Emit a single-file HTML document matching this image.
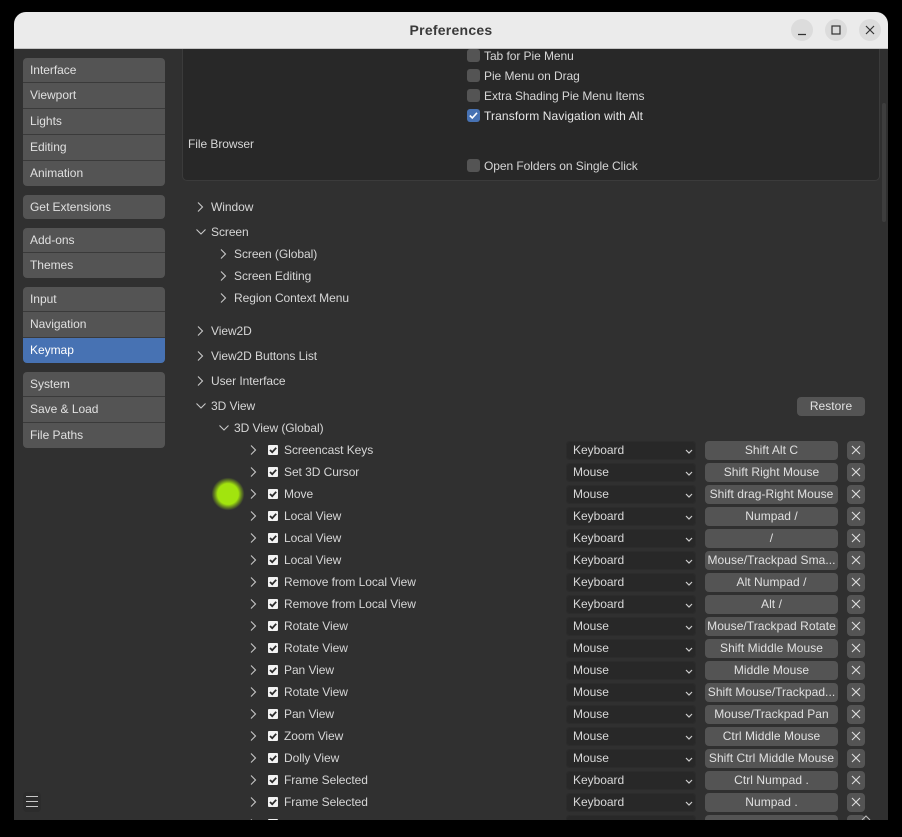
<!DOCTYPE html>
<html><head><meta charset="utf-8">
<style>
html,body{margin:0;padding:0;background:#000;width:902px;height:837px;overflow:hidden}
*{box-sizing:border-box}
#win{position:absolute;left:14px;top:12px;width:874px;height:808px;background:#303030;border-radius:12px 12px 0 0;overflow:hidden;
font-family:"Liberation Sans",sans-serif;font-size:12px;letter-spacing:-.06px;color:#d6d6d6}
#win>*{position:absolute}
#tb{left:0;top:0;width:874px;height:37px;background:#ebebeb;border-bottom:1px solid #c4c4c4;color:#3a3a3a;font-weight:bold;font-size:14px;text-align:center;line-height:36px;letter-spacing:.25px}
.wb{top:7px;width:22px;height:22px;border-radius:50%;background:#dcdcdc}
.wb svg{position:absolute;left:0;top:0}
.s{left:9px;width:142px;background:#545454;color:#e0e0e0;line-height:24px;padding-left:7px;border-bottom:1px solid #3a3a3a;height:25px;white-space:nowrap;letter-spacing:-.03px}
.f{border-radius:4px 4px 0 0}.l{border-radius:0 0 4px 4px;border-bottom:0}.o{border-radius:4px;border-bottom:0;height:24px}
.a{background:#4772b3;color:#fff}
#panel{left:168px;top:37px;width:698px;height:132px;background:#282828;border:1px solid #3b3b3b;border-top:0;border-radius:0 0 5px 5px}
.t{height:20px;line-height:20px;white-space:nowrap}
.c{left:453px;width:13px;height:13px;background:#545454;border-radius:3px}
.ch{width:12px;height:12px}
.d{left:552px;width:130px;height:19px;background:#282828;border-radius:4px;line-height:19px;padding-left:7px;color:#d8d8d8;box-shadow:inset 0 0 0 1px #2c2c2c;transform:translateY(1px);letter-spacing:-.03px}
.k{left:691px;width:133px;height:19px;background:#545454;border-radius:4px;line-height:19px;text-align:center;color:#e0e0e0;white-space:nowrap;overflow:hidden;letter-spacing:.05px;transform:translateY(1px)}
.x{left:833px;width:18px;height:19px;background:#545454;border-radius:4px;transform:translateY(1px)}
.x svg{margin-top:-1px}
.cb{left:254px;width:10px;height:10px;background:#f2f2f2;border-radius:1px}
</style></head><body>
<svg width="0" height="0" style="position:absolute"><defs>
<symbol id="r" viewBox="0 0 12 12"><path d="M4 1.500 8.500 6 4 10.500" fill="none" stroke="#c8c8c8" stroke-width="1.100"/></symbol>
<symbol id="w" viewBox="0 0 12 12"><path d="M2.500 3.500 7 8 11.500 3.500" fill="none" stroke="#c8c8c8" stroke-width="1.100"/></symbol>
<symbol id="dd" viewBox="0 0 8 6"><path d="M1 1 4 4 7 1" fill="none" stroke="#cfcfcf" stroke-width="1.200"/></symbol>
<symbol id="xx" viewBox="0 0 10 10"><path d="M1 1 9 9M9 1 1 9" fill="none" stroke="#dedede" stroke-width="1.100"/></symbol>
<symbol id="tk" viewBox="0 0 10 10"><path d="M2 5 4.200 7.200 8.200 2.800" fill="none" stroke="#2a2a2a" stroke-width="1.800"/></symbol>
</defs></svg>
<div id="win">
<div id="panel"></div>
<div id="tb">Preferences</div>
<div class="wb" style="left:777px"><svg width="22" height="22"><path d="M7 15.500H15" stroke="#333" stroke-width="1.200"/></svg></div>
<div class="wb" style="left:811px"><svg width="22" height="22"><rect x="7" y="7" width="8" height="8" fill="none" stroke="#333" stroke-width="1.200"/></svg></div>
<div class="wb" style="left:845px"><svg width="22" height="22"><path d="M7 7 15 15M15 7 7 15" stroke="#333" stroke-width="1.200"/></svg></div>

<div class="s f" style="top:46px">Interface</div>
<div class="s" style="top:71px;height:26px;line-height:25px">Viewport</div>
<div class="s" style="top:97px;height:26px;line-height:25px">Lights</div>
<div class="s" style="top:123px;height:26px;line-height:25px">Editing</div>
<div class="s l" style="top:149px">Animation</div>
<div class="s o" style="top:183px">Get Extensions</div>
<div class="s f" style="top:216px">Add-ons</div>
<div class="s l" style="top:241px">Themes</div>
<div class="s f" style="top:275px">Input</div>
<div class="s" style="top:300px;height:26px;line-height:25px">Navigation</div>
<div class="s l a" style="top:326px">Keymap</div>
<div class="s f" style="top:360px">System</div>
<div class="s" style="top:385px;height:26px;line-height:25px">Save &amp; Load</div>
<div class="s l" style="top:411px">File Paths</div>
<div style="left:9px;top:780px;width:18px;height:20px;background:#2c2c2c;border-radius:4px"><svg width="18" height="20" style="display:block"><path d="M3 4.500H15M3 9.500H15M3 14.500H15" stroke="#c8c8c8" stroke-width="1"/></svg></div>

<div class="c" style="top:37px"></div><div class="t" style="left:470px;top:34px">Tab for Pie Menu</div>
<div class="c" style="top:57px"></div><div class="t" style="left:470px;top:54px">Pie Menu on Drag</div>
<div class="c" style="top:77px"></div><div class="t" style="left:470px;top:74px">Extra Shading Pie Menu Items</div>
<div class="c" style="top:97px;background:#4772b3"><svg width="13" height="13" style="display:block"><path d="M2.800 6.500 5.300 9 10 3.800" fill="none" stroke="#fff" stroke-width="1.600"/></svg></div><div class="t" style="left:470px;top:94px;color:#e6e6e6;letter-spacing:.12px">Transform Navigation with Alt</div>
<div class="t" style="left:174px;top:122px">File Browser</div>
<div class="c" style="top:147px"></div><div class="t" style="left:470px;top:144px">Open Folders on Single Click</div>

<div style="left:868px;top:91px;width:4px;height:119px;background:#3e3e3e;border-radius:2px"></div>

<svg class="ch" style="left:180px;top:189px"><use href="#r"/></svg><div class="t" style="left:197px;top:185px">Window</div>
<svg class="ch" style="left:180px;top:214px"><use href="#w"/></svg><div class="t" style="left:197px;top:210px">Screen</div>
<svg class="ch" style="left:203px;top:236px"><use href="#r"/></svg><div class="t" style="left:220px;top:232px">Screen (Global)</div>
<svg class="ch" style="left:203px;top:258px"><use href="#r"/></svg><div class="t" style="left:220px;top:254px">Screen Editing</div>
<svg class="ch" style="left:203px;top:280px"><use href="#r"/></svg><div class="t" style="left:220px;top:276px">Region Context Menu</div>
<svg class="ch" style="left:180px;top:313px"><use href="#r"/></svg><div class="t" style="left:197px;top:309px">View2D</div>
<svg class="ch" style="left:180px;top:338px"><use href="#r"/></svg><div class="t" style="left:197px;top:334px">View2D Buttons List</div>
<svg class="ch" style="left:180px;top:363px"><use href="#r"/></svg><div class="t" style="left:197px;top:359px">User Interface</div>
<svg class="ch" style="left:180px;top:388px"><use href="#w"/></svg><div class="t" style="left:197px;top:384px">3D View</div>
<div class="k" style="left:783px;top:384px;width:68px">Restore</div>
<svg class="ch" style="left:203px;top:410px"><use href="#w"/></svg><div class="t" style="left:220px;top:406px">3D View (Global)</div>

<div style="left:193.500px;top:462px;width:40px;height:40px;border-radius:50%;background:radial-gradient(circle closest-side,#a2e40e 0,#a2e40e 52%,rgba(162,228,14,.5) 66%,rgba(162,228,14,0) 82%)"></div>

<svg class="ch" style="left:233px;top:432px"><use href="#r"/></svg><div class="cb" style="top:433px"><svg width="10" height="10" style="display:block"><use href="#tk"/></svg></div><div class="t" style="left:270px;top:428px">Screencast Keys</div><div class="d" style="top:428px">Keyboard<svg width="8" height="6" style="position:absolute;left:119px;top:8px"><use href="#dd"/></svg></div><div class="k" style="top:428px">Shift Alt C</div><div class="x" style="top:428px"><svg width="18" height="20" style="display:block"><use href="#xx" x="4" y="5" width="10" height="10"/></svg></div>
<svg class="ch" style="left:233px;top:454px"><use href="#r"/></svg><div class="cb" style="top:455px"><svg width="10" height="10" style="display:block"><use href="#tk"/></svg></div><div class="t" style="left:270px;top:450px">Set 3D Cursor</div><div class="d" style="top:450px">Mouse<svg width="8" height="6" style="position:absolute;left:119px;top:8px"><use href="#dd"/></svg></div><div class="k" style="top:450px">Shift Right Mouse</div><div class="x" style="top:450px"><svg width="18" height="20" style="display:block"><use href="#xx" x="4" y="5" width="10" height="10"/></svg></div>
<svg class="ch" style="left:233px;top:476px"><use href="#r"/></svg><div class="cb" style="top:477px"><svg width="10" height="10" style="display:block"><use href="#tk"/></svg></div><div class="t" style="left:270px;top:472px">Move</div><div class="d" style="top:472px">Mouse<svg width="8" height="6" style="position:absolute;left:119px;top:8px"><use href="#dd"/></svg></div><div class="k" style="top:472px">Shift drag-Right Mouse</div><div class="x" style="top:472px"><svg width="18" height="20" style="display:block"><use href="#xx" x="4" y="5" width="10" height="10"/></svg></div>
<svg class="ch" style="left:233px;top:498px"><use href="#r"/></svg><div class="cb" style="top:499px"><svg width="10" height="10" style="display:block"><use href="#tk"/></svg></div><div class="t" style="left:270px;top:494px">Local View</div><div class="d" style="top:494px">Keyboard<svg width="8" height="6" style="position:absolute;left:119px;top:8px"><use href="#dd"/></svg></div><div class="k" style="top:494px">Numpad /</div><div class="x" style="top:494px"><svg width="18" height="20" style="display:block"><use href="#xx" x="4" y="5" width="10" height="10"/></svg></div>
<svg class="ch" style="left:233px;top:520px"><use href="#r"/></svg><div class="cb" style="top:521px"><svg width="10" height="10" style="display:block"><use href="#tk"/></svg></div><div class="t" style="left:270px;top:516px">Local View</div><div class="d" style="top:516px">Keyboard<svg width="8" height="6" style="position:absolute;left:119px;top:8px"><use href="#dd"/></svg></div><div class="k" style="top:516px">/</div><div class="x" style="top:516px"><svg width="18" height="20" style="display:block"><use href="#xx" x="4" y="5" width="10" height="10"/></svg></div>
<svg class="ch" style="left:233px;top:542px"><use href="#r"/></svg><div class="cb" style="top:543px"><svg width="10" height="10" style="display:block"><use href="#tk"/></svg></div><div class="t" style="left:270px;top:538px">Local View</div><div class="d" style="top:538px">Keyboard<svg width="8" height="6" style="position:absolute;left:119px;top:8px"><use href="#dd"/></svg></div><div class="k" style="top:538px">Mouse/Trackpad Sma...</div><div class="x" style="top:538px"><svg width="18" height="20" style="display:block"><use href="#xx" x="4" y="5" width="10" height="10"/></svg></div>
<svg class="ch" style="left:233px;top:564px"><use href="#r"/></svg><div class="cb" style="top:565px"><svg width="10" height="10" style="display:block"><use href="#tk"/></svg></div><div class="t" style="left:270px;top:560px">Remove from Local View</div><div class="d" style="top:560px">Keyboard<svg width="8" height="6" style="position:absolute;left:119px;top:8px"><use href="#dd"/></svg></div><div class="k" style="top:560px">Alt Numpad /</div><div class="x" style="top:560px"><svg width="18" height="20" style="display:block"><use href="#xx" x="4" y="5" width="10" height="10"/></svg></div>
<svg class="ch" style="left:233px;top:586px"><use href="#r"/></svg><div class="cb" style="top:587px"><svg width="10" height="10" style="display:block"><use href="#tk"/></svg></div><div class="t" style="left:270px;top:582px">Remove from Local View</div><div class="d" style="top:582px">Keyboard<svg width="8" height="6" style="position:absolute;left:119px;top:8px"><use href="#dd"/></svg></div><div class="k" style="top:582px">Alt /</div><div class="x" style="top:582px"><svg width="18" height="20" style="display:block"><use href="#xx" x="4" y="5" width="10" height="10"/></svg></div>
<svg class="ch" style="left:233px;top:608px"><use href="#r"/></svg><div class="cb" style="top:609px"><svg width="10" height="10" style="display:block"><use href="#tk"/></svg></div><div class="t" style="left:270px;top:604px">Rotate View</div><div class="d" style="top:604px">Mouse<svg width="8" height="6" style="position:absolute;left:119px;top:8px"><use href="#dd"/></svg></div><div class="k" style="top:604px">Mouse/Trackpad Rotate</div><div class="x" style="top:604px"><svg width="18" height="20" style="display:block"><use href="#xx" x="4" y="5" width="10" height="10"/></svg></div>
<svg class="ch" style="left:233px;top:630px"><use href="#r"/></svg><div class="cb" style="top:631px"><svg width="10" height="10" style="display:block"><use href="#tk"/></svg></div><div class="t" style="left:270px;top:626px">Rotate View</div><div class="d" style="top:626px">Mouse<svg width="8" height="6" style="position:absolute;left:119px;top:8px"><use href="#dd"/></svg></div><div class="k" style="top:626px">Shift Middle Mouse</div><div class="x" style="top:626px"><svg width="18" height="20" style="display:block"><use href="#xx" x="4" y="5" width="10" height="10"/></svg></div>
<svg class="ch" style="left:233px;top:652px"><use href="#r"/></svg><div class="cb" style="top:653px"><svg width="10" height="10" style="display:block"><use href="#tk"/></svg></div><div class="t" style="left:270px;top:648px">Pan View</div><div class="d" style="top:648px">Mouse<svg width="8" height="6" style="position:absolute;left:119px;top:8px"><use href="#dd"/></svg></div><div class="k" style="top:648px">Middle Mouse</div><div class="x" style="top:648px"><svg width="18" height="20" style="display:block"><use href="#xx" x="4" y="5" width="10" height="10"/></svg></div>
<svg class="ch" style="left:233px;top:674px"><use href="#r"/></svg><div class="cb" style="top:675px"><svg width="10" height="10" style="display:block"><use href="#tk"/></svg></div><div class="t" style="left:270px;top:670px">Rotate View</div><div class="d" style="top:670px">Mouse<svg width="8" height="6" style="position:absolute;left:119px;top:8px"><use href="#dd"/></svg></div><div class="k" style="top:670px">Shift Mouse/Trackpad...</div><div class="x" style="top:670px"><svg width="18" height="20" style="display:block"><use href="#xx" x="4" y="5" width="10" height="10"/></svg></div>
<svg class="ch" style="left:233px;top:696px"><use href="#r"/></svg><div class="cb" style="top:697px"><svg width="10" height="10" style="display:block"><use href="#tk"/></svg></div><div class="t" style="left:270px;top:692px">Pan View</div><div class="d" style="top:692px">Mouse<svg width="8" height="6" style="position:absolute;left:119px;top:8px"><use href="#dd"/></svg></div><div class="k" style="top:692px">Mouse/Trackpad Pan</div><div class="x" style="top:692px"><svg width="18" height="20" style="display:block"><use href="#xx" x="4" y="5" width="10" height="10"/></svg></div>
<svg class="ch" style="left:233px;top:718px"><use href="#r"/></svg><div class="cb" style="top:719px"><svg width="10" height="10" style="display:block"><use href="#tk"/></svg></div><div class="t" style="left:270px;top:714px">Zoom View</div><div class="d" style="top:714px">Mouse<svg width="8" height="6" style="position:absolute;left:119px;top:8px"><use href="#dd"/></svg></div><div class="k" style="top:714px">Ctrl Middle Mouse</div><div class="x" style="top:714px"><svg width="18" height="20" style="display:block"><use href="#xx" x="4" y="5" width="10" height="10"/></svg></div>
<svg class="ch" style="left:233px;top:740px"><use href="#r"/></svg><div class="cb" style="top:741px"><svg width="10" height="10" style="display:block"><use href="#tk"/></svg></div><div class="t" style="left:270px;top:736px">Dolly View</div><div class="d" style="top:736px">Mouse<svg width="8" height="6" style="position:absolute;left:119px;top:8px"><use href="#dd"/></svg></div><div class="k" style="top:736px">Shift Ctrl Middle Mouse</div><div class="x" style="top:736px"><svg width="18" height="20" style="display:block"><use href="#xx" x="4" y="5" width="10" height="10"/></svg></div>
<svg class="ch" style="left:233px;top:762px"><use href="#r"/></svg><div class="cb" style="top:763px"><svg width="10" height="10" style="display:block"><use href="#tk"/></svg></div><div class="t" style="left:270px;top:758px">Frame Selected</div><div class="d" style="top:758px">Keyboard<svg width="8" height="6" style="position:absolute;left:119px;top:8px"><use href="#dd"/></svg></div><div class="k" style="top:758px">Ctrl Numpad .</div><div class="x" style="top:758px"><svg width="18" height="20" style="display:block"><use href="#xx" x="4" y="5" width="10" height="10"/></svg></div>
<svg class="ch" style="left:233px;top:784px"><use href="#r"/></svg><div class="cb" style="top:785px"><svg width="10" height="10" style="display:block"><use href="#tk"/></svg></div><div class="t" style="left:270px;top:780px">Frame Selected</div><div class="d" style="top:780px">Keyboard<svg width="8" height="6" style="position:absolute;left:119px;top:8px"><use href="#dd"/></svg></div><div class="k" style="top:780px">Numpad .</div><div class="x" style="top:780px"><svg width="18" height="20" style="display:block"><use href="#xx" x="4" y="5" width="10" height="10"/></svg></div>
<svg class="ch" style="left:233px;top:806px"><use href="#r"/></svg><div class="cb" style="top:807px"></div><div class="d" style="top:802px"></div><div class="k" style="top:802px"></div><div class="x" style="top:802px"></div>
<svg width="10" height="6" style="left:847px;top:803px"><path d="M1 5 5 1 9 5" fill="none" stroke="#bbb" stroke-width="1.100"/></svg>
</div>
</body></html>
